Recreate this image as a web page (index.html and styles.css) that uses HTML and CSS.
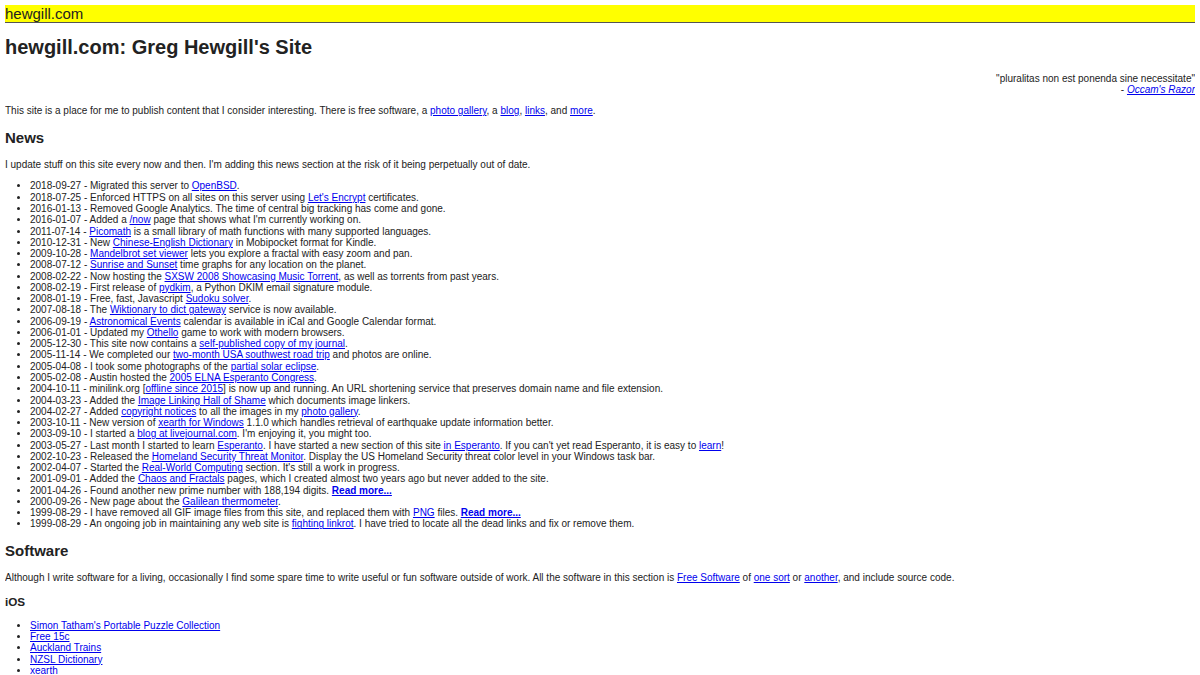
FILE: index.html
```html
<!DOCTYPE html>
<html>
<head>
<meta charset="utf-8">
<title>hewgill.com: Greg Hewgill's Site</title>
<link rel="stylesheet" href="styles.css">
</head>
<body>
<div class="topbar"><a class="toplink" href="#">hewgill.com</a></div>
<h1>hewgill.com: Greg Hewgill's Site</h1>
<div class="quote">"pluralitas non est ponenda sine necessitate"<br>- <a href="#"><i>Occam's Razor</i></a></div>
<p>This site is a place for me to publish content that I consider interesting. There is free software, a <a href="#">photo gallery</a>, a <a href="#">blog</a>, <a href="#">links</a>, and <a href="#">more</a>.</p>
<h2>News</h2>
<p>I update stuff on this site every now and then. I'm adding this news section at the risk of it being perpetually out of date.</p>
<ul>
<li>2018-09-27 - Migrated this server to <a href="#">OpenBSD</a>.</li>
<li>2018-07-25 - Enforced HTTPS on all sites on this server using <a href="#">Let's Encrypt</a> certificates.</li>
<li>2016-01-13 - Removed Google Analytics. The time of central big tracking has come and gone.</li>
<li>2016-01-07 - Added a <a href="#">/now</a> page that shows what I'm currently working on.</li>
<li>2011-07-14 - <a href="#">Picomath</a> is a small library of math functions with many supported languages.</li>
<li>2010-12-31 - New <a href="#">Chinese-English Dictionary</a> in Mobipocket format for Kindle.</li>
<li>2009-10-28 - <a href="#">Mandelbrot set viewer</a> lets you explore a fractal with easy zoom and pan.</li>
<li>2008-07-12 - <a href="#">Sunrise and Sunset</a> time graphs for any location on the planet.</li>
<li>2008-02-22 - Now hosting the <a href="#">SXSW 2008 Showcasing Music Torrent</a>, as well as torrents from past years.</li>
<li>2008-02-19 - First release of <a href="#">pydkim</a>, a Python DKIM email signature module.</li>
<li>2008-01-19 - Free, fast, Javascript <a href="#">Sudoku solver</a>.</li>
<li>2007-08-18 - The <a href="#">Wiktionary to dict gateway</a> service is now available.</li>
<li>2006-09-19 - <a href="#">Astronomical Events</a> calendar is available in iCal and Google Calendar format.</li>
<li>2006-01-01 - Updated my <a href="#">Othello</a> game to work with modern browsers.</li>
<li>2005-12-30 - This site now contains a <a href="#">self-published copy of my journal</a>.</li>
<li>2005-11-14 - We completed our <a href="#">two-month USA southwest road trip</a> and photos are online.</li>
<li>2005-04-08 - I took some photographs of the <a href="#">partial solar eclipse</a>.</li>
<li>2005-02-08 - Austin hosted the <a href="#">2005 ELNA Esperanto Congress</a>.</li>
<li>2004-10-11 - minilink.org [<a href="#">offline since 2015</a>] is now up and running. An URL shortening service that preserves domain name and file extension.</li>
<li>2004-03-23 - Added the <a href="#">Image Linking Hall of Shame</a> which documents image linkers.</li>
<li>2004-02-27 - Added <a href="#">copyright notices</a> to all the images in my <a href="#">photo gallery</a>.</li>
<li>2003-10-11 - New version of <a href="#">xearth for Windows</a> 1.1.0 which handles retrieval of earthquake update information better.</li>
<li>2003-09-10 - I started a <a href="#">blog at livejournal.com</a>. I'm enjoying it, you might too.</li>
<li>2003-05-27 - Last month I started to learn <a href="#">Esperanto</a>. I have started a new section of this site <a href="#">in Esperanto</a>. If you can't yet read Esperanto, it is easy to <a href="#">learn</a>!</li>
<li>2002-10-23 - Released the <a href="#">Homeland Security Threat Monitor</a>. Display the US Homeland Security threat color level in your Windows task bar.</li>
<li>2002-04-07 - Started the <a href="#">Real-World Computing</a> section. It's still a work in progress.</li>
<li>2001-09-01 - Added the <a href="#">Chaos and Fractals</a> pages, which I created almost two years ago but never added to the site.</li>
<li>2001-04-26 - Found another new prime number with 188,194 digits. <a class="more" href="#">Read more...</a></li>
<li>2000-09-26 - New page about the <a href="#">Galilean thermometer</a>.</li>
<li>1999-08-29 - I have removed all GIF image files from this site, and replaced them with <a href="#">PNG</a> files. <a class="more" href="#">Read more...</a></li>
<li>1999-08-29 - An ongoing job in maintaining any web site is <a href="#">fighting linkrot</a>. I have tried to locate all the dead links and fix or remove them.</li>
</ul>
<h2>Software</h2>
<p>Although I write software for a living, occasionally I find some spare time to write useful or fun software outside of work. All the software in this section is <a href="#">Free Software</a> of <a href="#">one sort</a> or <a href="#">another</a>, and include source code.</p>
<h3>iOS</h3>
<ul>
<li><a href="#">Simon Tatham's Portable Puzzle Collection</a></li>
<li><a href="#">Free 15c</a></li>
<li><a href="#">Auckland Trains</a></li>
<li><a href="#">NZSL Dictionary</a></li>
<li><a href="#">xearth</a></li>
</ul>
</body>
</html>
```
FILE: styles.css
```css
html {
  background: #fff;
}
body {
  margin: 5px;
  font-family: "Liberation Sans", Arial, sans-serif;
  font-size: 10px;
  line-height: 1.127;
  color: #222;
}
a {
  color: #0000ee;
}
.topbar {
  background: #ffff00;
  border-bottom: 1px solid #555;
  font-size: 15px;
  line-height: 17px;
}
.toplink {
  color: #222;
  text-decoration: none;
}
h1 {
  font-size: 20px;
  line-height: 1.15;
  margin: 13.4px 0;
}
h2 {
  font-size: 15px;
  line-height: 1.15;
  margin: 12.45px 0;
}
h3 {
  font-size: 11.7px;
  line-height: 1.15;
  margin: 11.7px 0;
}
p {
  margin: 10px 0;
}
.quote {
  text-align: right;
}
ul {
  margin: 10.5px 0;
  padding-left: 25px;
}
.more {
  font-weight: bold;
}
```
